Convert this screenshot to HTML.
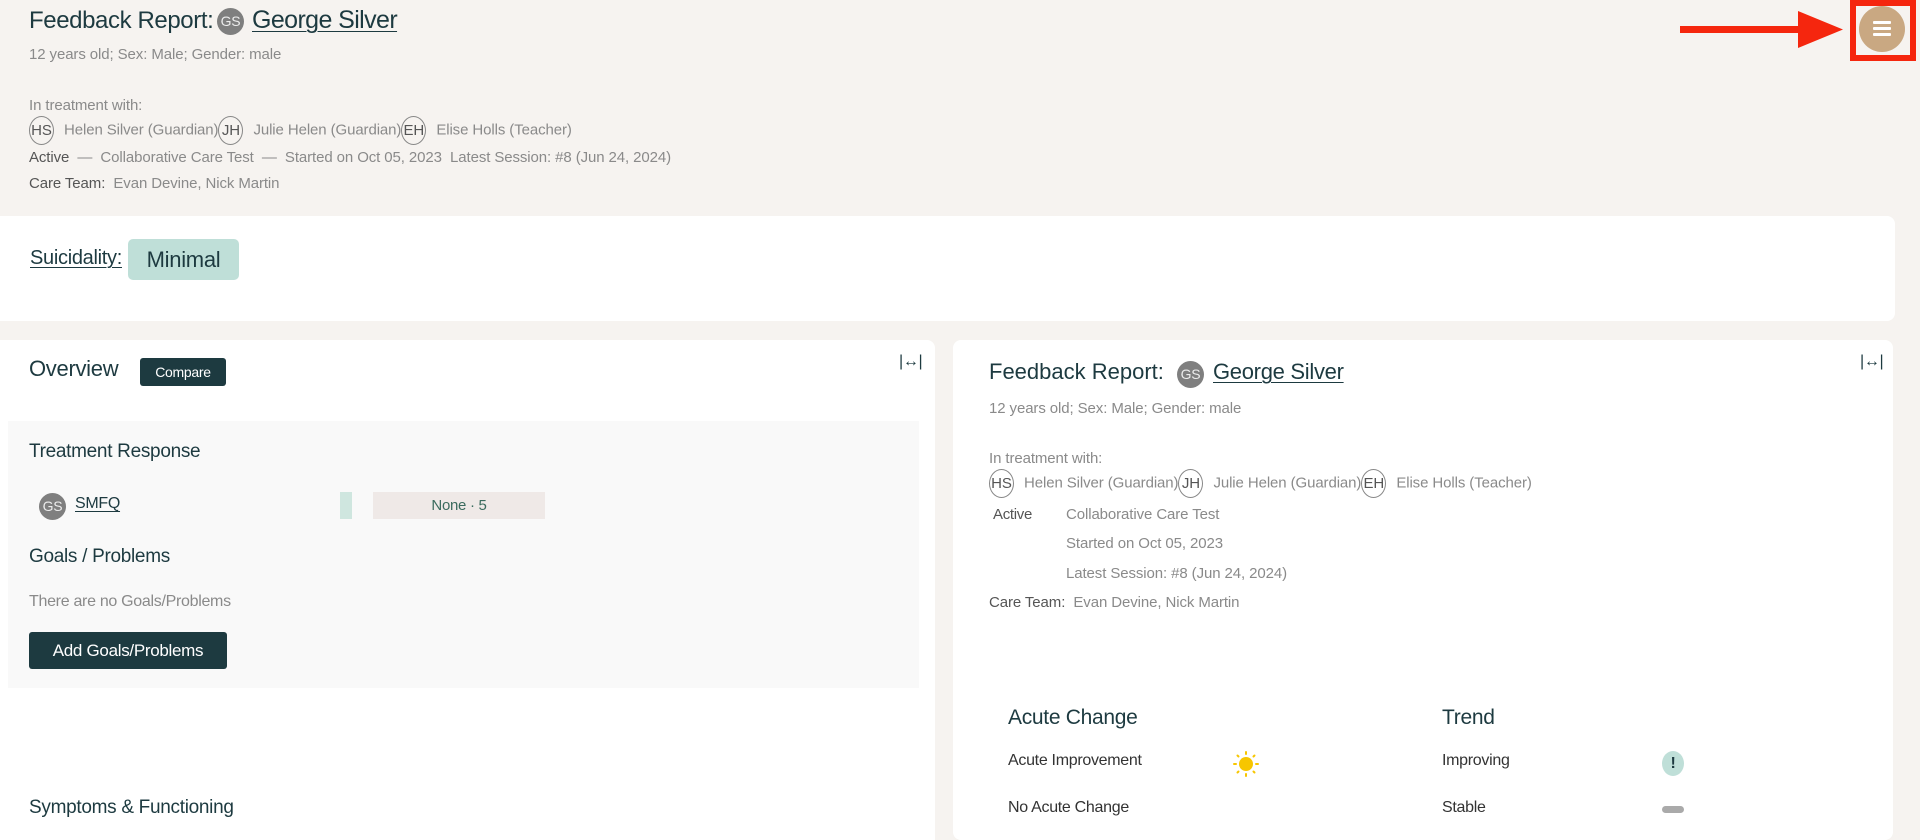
<!DOCTYPE html>
<html><head><meta charset="utf-8"><style>
*{margin:0;padding:0;box-sizing:border-box}
body{width:1920px;height:827px;overflow:hidden;background:#f6f3f0;font-family:"Liberation Sans",sans-serif;color:#1d3a40;position:relative;letter-spacing:-0.3px}
.a{position:absolute;white-space:nowrap}
.g{color:#8a8a8a;letter-spacing:-0.1px}
.gs{position:absolute;border-radius:50%;background:#7f7f7f;color:#ececec;text-align:center;font-size:14px}
.av{display:inline-block;width:25px;height:29px;border:1px solid #888;border-radius:50%;text-align:center;line-height:27px;color:#555;font-size:15px;vertical-align:middle;margin-right:10px}
.card{position:absolute;background:#fff;border-radius:8px}
.btn{position:absolute;background:#1d3a40;color:#fff;border-radius:3px;text-align:center}
u{text-decoration-thickness:1px;text-underline-offset:3px}
</style></head><body>
<div class="a" style="left:29px;top:7px;font-size:24px;letter-spacing:-0.4px">Feedback Report:</div>
<div class="gs" style="left:217px;top:8px;width:27px;height:27px;line-height:27px">GS</div>
<div class="a" style="left:252px;top:6px;font-size:25px;letter-spacing:-0.6px"><u>George Silver</u></div>
<div class="a g" style="left:29px;top:46px;font-size:15px">12 years old; Sex: Male; Gender: male</div>
<div class="a g" style="left:29px;top:97px;font-size:15px">In treatment with:</div>
<div class="a g" style="left:29px;top:116px;font-size:15px"><span class="av">HS</span>Helen Silver (Guardian)<span class="av" style="margin-left:0">JH</span>Julie Helen (Guardian)<span class="av" style="margin-left:0">EH</span>Elise Holls (Teacher)</div>
<div class="a g" style="left:29px;top:149px;font-size:15px"><span style="color:#555">Active</span> &nbsp;— &nbsp;Collaborative Care Test &nbsp;— &nbsp;Started on Oct 05, 2023 &nbsp;Latest Session: #8 (Jun 24, 2024)</div>
<div class="a g" style="left:29px;top:175px;font-size:15px"><span style="color:#555">Care Team:</span> &nbsp;Evan Devine, Nick Martin</div>
<svg class="a" style="left:1675px;top:0" width="245" height="62"><rect x="5" y="26" width="125" height="7" fill="#f5260e"/><polygon points="123,11 168,29.5 123,48" fill="#f5260e"/><rect x="178" y="3" width="60" height="55" fill="none" stroke="#f5260e" stroke-width="6"/></svg>
<div style="position:absolute;left:1859px;top:6px;width:46px;height:46px;border-radius:50%;background:#c9a882"></div>
<div style="position:absolute;left:1873px;top:21px;width:18px;height:3px;border-radius:1px;background:#fff;box-shadow:0 6px 0 #fff,0 12px 0 #fff"></div>

<div class="card" style="left:0;top:216px;width:1895px;height:105px;border-radius:0 8px 8px 0"></div>
<div class="a" style="left:30px;top:247px;font-size:20px"><u>Suicidality: </u></div>
<div class="a" style="left:128px;top:239px;width:111px;height:41px;background:#bfdfd8;border-radius:5px;font-size:22px;text-align:center;line-height:41px">Minimal</div>

<div class="card" style="left:0;top:340px;width:935px;height:500px;border-radius:0 8px 0 0"></div>
<div class="a" style="left:29px;top:356px;font-size:22px">Overview</div>
<div class="btn" style="left:140px;top:358px;width:86px;height:28px;line-height:28px;font-size:14px">Compare</div>
<div class="a" style="left:899px;top:353px;font-size:16px;color:#1d3a40">|↔|</div>
<div style="position:absolute;left:8px;top:421px;width:911px;height:267px;background:#f9f9f9"></div>
<div class="a" style="left:29px;top:441px;font-size:19px">Treatment Response</div>
<div class="gs" style="left:39px;top:493px;width:27px;height:27px;line-height:27px">GS</div>
<div class="a" style="left:75px;top:495px;font-size:16px"><u>SMFQ</u></div>
<div style="position:absolute;left:340px;top:492px;width:12px;height:27px;background:#cfe6df"></div>
<div class="a" style="left:373px;top:492px;width:172px;height:27px;background:#efe9e7;line-height:27px;text-align:center;font-size:15px;color:#3b6b5e">None · 5</div>
<div class="a" style="left:29px;top:546px;font-size:19px">Goals / Problems</div>
<div class="a g" style="left:29px;top:593px;font-size:16px;letter-spacing:-0.3px">There are no Goals/Problems</div>
<div class="btn" style="left:29px;top:632px;width:198px;height:37px;line-height:37px;font-size:17px">Add Goals/Problems</div>
<div class="a" style="left:29px;top:797px;font-size:19px">Symptoms &amp; Functioning</div>

<div class="card" style="left:953px;top:340px;width:940px;height:500px"></div>
<div class="a" style="left:989px;top:359px;font-size:22px;letter-spacing:0">Feedback Report:</div>
<div class="gs" style="left:1177px;top:361px;width:27px;height:27px;line-height:27px">GS</div>
<div class="a" style="left:1213px;top:359px;font-size:22px"><u>George Silver</u></div>
<div class="a" style="left:1860px;top:353px;font-size:16px">|↔|</div>
<div class="a g" style="left:989px;top:400px;font-size:15px">12 years old; Sex: Male; Gender: male</div>
<div class="a g" style="left:989px;top:450px;font-size:15px">In treatment with:</div>
<div class="a g" style="left:989px;top:469px;font-size:15px"><span class="av">HS</span>Helen Silver (Guardian)<span class="av" style="margin-left:0">JH</span>Julie Helen (Guardian)<span class="av" style="margin-left:0">EH</span>Elise Holls (Teacher)</div>
<div class="a" style="left:993px;top:506px;font-size:15px;color:#555">Active</div>
<div class="a g" style="left:1066px;top:506px;font-size:15px">Collaborative Care Test</div>
<div class="a g" style="left:1066px;top:535px;font-size:15px">Started on Oct 05, 2023</div>
<div class="a g" style="left:1066px;top:565px;font-size:15px">Latest Session: #8 (Jun 24, 2024)</div>
<div class="a g" style="left:989px;top:594px;font-size:15px"><span style="color:#555">Care Team:</span> &nbsp;Evan Devine, Nick Martin</div>
<div class="a" style="left:1008px;top:706px;font-size:21px">Acute Change</div>
<div class="a" style="left:1442px;top:706px;font-size:21px">Trend</div>
<div class="a" style="left:1008px;top:752px;font-size:16px;color:#333">Acute Improvement</div>
<svg class="a" style="left:1233px;top:751px" width="26" height="26" viewBox="0 0 26 26"><circle cx="13" cy="13" r="7" fill="#f7c600"/><g stroke="#f7c600" stroke-width="2" stroke-linecap="round"><line x1="13" y1="1" x2="13" y2="3"/><line x1="13" y1="23" x2="13" y2="25"/><line x1="1" y1="13" x2="3" y2="13"/><line x1="23" y1="13" x2="25" y2="13"/><line x1="4.5" y1="4.5" x2="5.5" y2="5.5"/><line x1="20.5" y1="20.5" x2="21.5" y2="21.5"/><line x1="4.5" y1="21.5" x2="5.5" y2="20.5"/><line x1="20.5" y1="5.5" x2="21.5" y2="4.5"/></g></svg>
<div class="a" style="left:1442px;top:752px;font-size:16px;color:#333">Improving</div>
<div class="a" style="left:1662px;top:751px;width:22px;height:25px;border-radius:50%;background:#bfdfd8;text-align:center;line-height:25px;font-size:16px;font-weight:bold">!</div>
<div class="a" style="left:1008px;top:799px;font-size:16px;color:#333">No Acute Change</div>
<div class="a" style="left:1442px;top:799px;font-size:16px;color:#333">Stable</div>
<div class="a" style="left:1662px;top:806px;width:22px;height:7px;border-radius:4px;background:#aaa"></div>
</body></html>
